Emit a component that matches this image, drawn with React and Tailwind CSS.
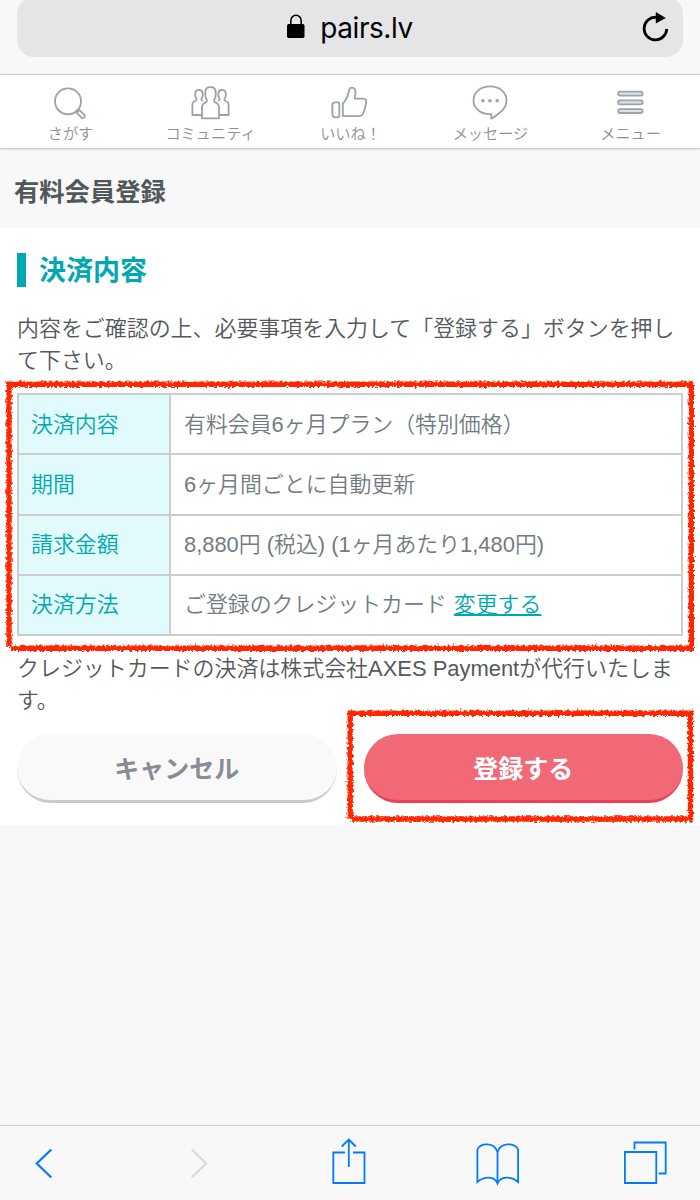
import React from "react";

const icon = {
  fill: "none",
  stroke: "#9aa2ab",
  strokeWidth: 1.8,
  strokeLinejoin: "round",
  strokeLinecap: "round",
};

function SearchIcon() {
  return (
    <svg width="44" height="40" viewBox="48 82 44 40" {...icon}>
      <circle cx="68" cy="101.3" r="13" />
      <path d="M76.5 112.5l5 5.1a1.9 1.9 0 0 0 2.8-2.7l-5.1-5z" />
      <path d="M76.7 110.3l1.2 1.2" />
    </svg>
  );
}

function CommunityIcon() {
  return (
    <svg width="44" height="40" viewBox="188 82 44 40" {...icon}>
      <path d="M202 118.3v-10.5q0-4 3.2-5.2 2.3-.8 1.5-3.1-1.4-1.8-1.4-4.3v-3q0-5 5.2-5t5.2 5v3q0 2.5-1.4 4.3-.8 2.3 1.5 3.1 3.2 1.2 3.2 5.2v10.5z" />
      <path d="M202 115h-9.6v-10q0-3.2 2.8-4 1.9-.6 1.2-2.3-1.2-1.3-1.2-3.6v-1.3q0-3.7 3.8-3.9 3.4.1 3.7 3.4v1.6q0 2-1.3 3.6-.4 1.5 1 2" />
      <path d="M219 115h9.6v-10q0-3.2-2.8-4-1.9-.6-1.2-2.3 1.2-1.3 1.2-3.6v-1.3q0-3.7-3.8-3.9-3.4.1-3.7 3.4v1.6q0 2 1.3 3.6.4 1.5-1 2" />
    </svg>
  );
}

function LikeIcon() {
  return (
    <svg width="44" height="40" viewBox="328 82 44 40" {...icon}>
      <path d="M332.400 105q0-2.700 2.700-2.700h2.700q1.500 0 1.500 1.500v12q0 1.500-1.500 1.500h-2.400q-3 0-3-3z" />
      <path d="M342.800 103.500q4-3.200 6.200-12.800.6-3 2.700-3 3.800.2 3.800 4.400l-.8 5.900q0 .6.700.6h8q3.200.2 2.800 3.600-1 7.400-3.400 12-1 1.900-3.300 1.900h-16.700z" />
    </svg>
  );
}

function MessageIcon() {
  return (
    <svg width="44" height="40" viewBox="468 82 44 40" {...icon}>
      <path d="M491.300 118.600v-4.500c-10.500.4-17.800-5.600-17.800-13.600 0-8.200 7-14.100 16.500-14.100s16.500 5.900 16.500 14.100c0 5.700-3.200 9.500-7.200 12.500-2.600 2-5 4.400-8 5.600z" />
      <g fill="#9aa2ab" stroke="none">
        <circle cx="482.900" cy="100.700" r="1.800" />
        <circle cx="490" cy="100.700" r="1.800" />
        <circle cx="497.100" cy="100.700" r="1.800" />
      </g>
    </svg>
  );
}

function MenuIcon() {
  return (
    <svg width="44" height="40" viewBox="608 82 44 40" {...icon} fill="#dde1e5">
      <rect x="618.200" y="91.700" width="24.400" height="3.900" rx="1.800" />
      <rect x="618.200" y="100.400" width="24.400" height="3.900" rx="1.800" />
      <rect x="618.200" y="109.100" width="24.400" height="3.900" rx="1.800" />
    </svg>
  );
}

const tabs = [
  ["さがす", SearchIcon],
  ["コミュニティ", CommunityIcon],
  ["いいね！", LikeIcon],
  ["メッセージ", MessageIcon],
  ["メニュー", MenuIcon],
];

const rows = [
  ["決済内容", "有料会員6ヶ月プラン（特別価格）"],
  ["期間", "6ヶ月間ごとに自動更新"],
  ["請求金額", "8,880円 (税込) (1ヶ月あたり1,480円)"],
  ["決済方法", "ご登録のクレジットカード "],
];

// Hand-drawn crayon frames laid over the table and the submit button.
function Highlights() {
  return (
    <svg className="pointer-events-none absolute inset-0" width="700" height="1200" viewBox="0 0 700 1200">
      <defs>
        <filter id="crayon" filterUnits="userSpaceOnUse" x="0" y="370" width="700" height="470">
          <feTurbulence type="fractalNoise" baseFrequency="0.4" numOctaves="2" seed="7" result="n" />
          <feDisplacementMap in="SourceGraphic" in2="n" scale="5" xChannelSelector="R" yChannelSelector="G" />
        </filter>
      </defs>
      <g fill="none" stroke="#ff2600" strokeWidth="5.400" filter="url(#crayon)">
        <path d="M6 384.200H694M691.300 382V650.500M694 648.300H11M9 382V647" />
        <path d="M348 713.300H693M690.500 711V821M693 819H351M350.200 711V818.500" />
      </g>
    </svg>
  );
}

export default function App() {
  return (
    <div className="relative flex h-[1200px] w-[700px] flex-col overflow-hidden bg-[#f8f8f8] font-['Liberation_Sans','Noto_Sans_CJK_JP',sans-serif] font-[350] text-[#54595b]">
      <header className="h-[75px] shrink-0 border-b border-[#cfd0d1] px-[17px]">
        <div className="relative -mt-[3px] flex h-[60px] items-center justify-center rounded-[17px] bg-[#e5e5e7] pt-[3px] text-black">
          <svg width="18" height="25" viewBox="0 0 18 25" className="mr-[15px] mb-[4px]">
            <path d="M3.800 11V6.800a5.200 5.600 0 0 1 10.400 0V11" fill="none" stroke="#000" strokeWidth="1.600" />
            <rect x="0" y="10" width="17.500" height="14" rx="1.700" />
          </svg>
          <span className="mb-[2px] font-[Inter] text-[28px] leading-8 font-normal tracking-[-0.450px]">pairs.lv</span>
          <svg width="30" height="34" viewBox="640 10 30 34" className="absolute top-[13px] right-[13px]">
            <path d="M656.300 17.300A11.300 11.300 0 1 0 666.700 29" fill="none" stroke="#000" strokeWidth="2.800" />
            <path d="M655.800 12l10 6-10 5.600z" />
          </svg>
        </div>
      </header>

      <nav className="grid h-[73px] shrink-0 grid-cols-5 bg-white shadow-[0_1px_2px_rgba(0,0,0,0.25)]">
        {tabs.map(([label, Icon]) => (
          <div key={label} className="flex flex-col items-center pt-[7px]">
            <Icon />
            <span className="mt-px pl-px text-[15.200px] leading-[22px] whitespace-nowrap text-[#8b9199]">{label}</span>
          </div>
        ))}
      </nav>

      <div className="flex h-[80px] shrink-0 items-center px-[14px] pt-[8px]">
        <h1 className="text-[25.300px] leading-9 font-bold text-[#50585a]">有料会員登録</h1>
      </div>

      <main className="h-[597px] shrink-0 bg-white px-[17px] pt-[25px]">
        <h2 className="flex h-[34px] items-center border-l-[9px] border-[#00a9b1] pt-[3px] pl-[13px] text-[27px] font-bold text-[#00a9b1]">
          決済内容
        </h2>
        <p className="mt-[26px] text-[21.950px] leading-[32px] whitespace-nowrap">
          内容をご確認の上、必要事項を入力して「登録する」ボタンを押し
          <br />
          て下さい。
        </p>
        <table className="mt-[16px] w-[666px] table-fixed border-collapse text-[21.900px] leading-[32px]">
          <colgroup>
            <col className="w-[152px]" />
            <col />
          </colgroup>
          <tbody>
            {rows.map(([name, value], i) => (
              <tr key={name} className="h-[60.250px]">
                <th className="border-2 border-[#cccece] bg-[#e1fafb] p-0 pt-px pl-[12px] text-left font-[350] text-[#00a9b1]">
                  {name}
                </th>
                <td className="border-2 border-[#cccece] p-0 pt-px pl-[13px] text-[#737b82]">
                  {value}
                  {i === 3 && (
                    <a href="#" className="ml-px text-[#00a9b1] underline">
                      変更する
                    </a>
                  )}
                </td>
              </tr>
            ))}
          </tbody>
        </table>
        <p className="mt-[17px] text-[21.950px] leading-[32px] whitespace-nowrap">
          クレジットカードの決済は株式会社AXES Paymentが代行いたしま
          <br />
          す。
        </p>
        <div className="mt-[17px] flex gap-[27px] text-[25px] font-bold">
          <button className="h-[69px] w-[320px] rounded-[34px] border-b-[3px] border-[#c9cccd] bg-[#f9f9f9] pt-[5px] text-[#868d95]">
            キャンセル
          </button>
          <button className="h-[69px] w-[320px] rounded-[34px] border-b-[3px] border-[#ef3e55] bg-[#f16977] pt-[5px] text-white">
            登録する
          </button>
        </div>
      </main>

      <footer className="mt-auto h-[75px] shrink-0 border-t border-[#cbcccd]">
        <svg width="700" height="74" viewBox="0 1126 700 74" fill="none" stroke="#007aff" strokeWidth="1.800">
          <path d="M51.300 1149.500L36.800 1163.500L51.300 1177.500" strokeWidth="2.200" />
          <path d="M191.700 1149.500L206.200 1163.500L191.700 1177.500" stroke="#d9dadb" strokeWidth="2.200" />
          <path d="M345 1152.500H333.300V1183H364.500V1152.500H353M348.800 1167V1139.500M341.800 1146.500L348.800 1139.500L355.800 1146.500" />
          <path d="M497.500 1183.500V1152C494.500 1142 480.500 1142.500 477.400 1149.500V1182C484 1176.200 494.500 1175.500 497.500 1183.500C500.500 1175.500 511.500 1176.200 518.100 1182V1149.500C515 1142.500 500.500 1142 497.500 1152" />
          <path d="M624.900 1152H656.300V1183H624.900ZM634.500 1149.500V1142.500H665.700V1173.500H658.700" />
        </svg>
      </footer>
      <Highlights />
    </div>
  );
}
